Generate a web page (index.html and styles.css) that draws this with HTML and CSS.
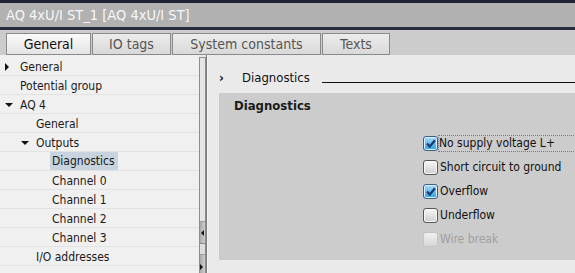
FILE: index.html
```html
<!DOCTYPE html>
<html lang="en">
<head>
    <meta charset="UTF-8">
    <title>AQ 4xU/I ST_1</title>
    <link rel="stylesheet" href="styles.css">
</head>
<body>
    <div class="window">
        <div class="topband"></div>
        <div class="titlebar">AQ 4xU/I ST_1 [AQ 4xU/I ST]</div>
        <div class="titleline"></div>

        <!-- Tabs -->
        <div class="tabbar">
            <div class="tab active tab-general">General</div>
            <div class="tab tab-io">IO tags</div>
            <div class="tab tab-sys">System constants</div>
            <div class="tab tab-texts">Texts</div>
        </div>

        <div class="main">
            <!-- Navigation tree -->
            <div class="tree">
                <div class="row lvl0"><span class="tog"><span class="arrow-right"></span></span>General</div>
                <div class="row lvl0"><span class="tog"></span>Potential group</div>
                <div class="row lvl0"><span class="tog"><span class="arrow-down"></span></span>AQ 4</div>
                <div class="row lvl1"><span class="tog"></span>General</div>
                <div class="row lvl1"><span class="tog"><span class="arrow-down"></span></span>Outputs</div>
                <div class="row lvl2"><span class="tog"></span><span class="selected">Diagnostics</span></div>
                <div class="row lvl2"><span class="tog"></span>Channel 0</div>
                <div class="row lvl2"><span class="tog"></span>Channel 1</div>
                <div class="row lvl2"><span class="tog"></span>Channel 2</div>
                <div class="row lvl2"><span class="tog"></span>Channel 3</div>
                <div class="row lvl1"><span class="tog"></span>I/O addresses</div>
            </div>

            <div class="vscroll">
                <div class="vscroll-fill"></div>
                <div class="split-btn"><span class="tri-left"></span></div>
                <div class="split-gap"></div>
                <div class="split-btn last"><span class="tri-right"></span></div>
            </div>
            <div class="splitter"></div>

            <!-- Properties area -->
            <div class="content">
                <div class="section-head">
                    <span class="chev">&rsaquo;</span>
                    <span class="section-title">Diagnostics</span>
                    <span class="section-line"></span>
                </div>

                <div class="group">
                    <div class="group-title">Diagnostics</div>
                    <div class="options">
                        <div class="option">
                            <span class="cb checked">
                                <svg width="10" height="9" viewBox="0 0 10 9"><path d="M1 4.5 L3.8 7.5 L9 1.2" fill="none" stroke="#183a72" stroke-width="2.2"/></svg>
                            </span>
                            <span class="opt-label focused">No supply voltage L+</span>
                        </div>
                        <div class="option">
                            <span class="cb"></span>
                            <span class="opt-label">Short circuit to ground</span>
                        </div>
                        <div class="option">
                            <span class="cb checked">
                                <svg width="10" height="9" viewBox="0 0 10 9"><path d="M1 4.5 L3.8 7.5 L9 1.2" fill="none" stroke="#183a72" stroke-width="2.2"/></svg>
                            </span>
                            <span class="opt-label">Overflow</span>
                        </div>
                        <div class="option">
                            <span class="cb"></span>
                            <span class="opt-label">Underflow</span>
                        </div>
                        <div class="option disabled">
                            <span class="cb"></span>
                            <span class="opt-label">Wire break</span>
                        </div>
                    </div>
                </div>
            </div>
        </div>
    </div>
</body>
</html>
```

FILE: styles.css
```css
* {
    box-sizing: border-box;
    margin: 0;
    padding: 0;
}

body {
    font-family: "DejaVu Sans Condensed", "DejaVu Sans", sans-serif;
    background-color: #ebebeb;
}

.window {
    width: 575px;
    height: 273px;
    overflow: hidden;
}

.topband {
    height: 3px;
    background: #1e2236;
}

.titlebar {
    height: 24px;
    line-height: 24px;
    padding-left: 6px;
    background: #b1b1b1;
    color: #f7f7f7;
    font-size: 14.5px;
    white-space: nowrap;
}

.titleline {
    height: 3px;
    background: #262b3e;
}

/* Tabs */
.tabbar {
    height: 25px;
    background: #cccccc;
    display: flex;
    align-items: flex-end;
    padding-left: 6px;
    gap: 1px;
}

.tab {
    height: 22px;
    line-height: 20px;
    border: 1px solid #8a8a8a;
    background: linear-gradient(#ececec, #d9d9d9);
    color: #555;
    font-size: 14px;
    text-align: center;
    white-space: nowrap;
}

.tab.active {
    background: linear-gradient(#fafafa, #e4e4e4);
    color: #111;
}

.tab-general { width: 85px; }
.tab-io { width: 79px; }
.tab-sys { width: 149px; }
.tab-texts { width: 68px; }

.main {
    display: flex;
    height: 218px;
}

/* Tree */
.tree {
    width: 199px;
    flex-shrink: 0;
    background: #f0f0f0;
    padding-top: 2px;
    font-size: 12px;
    color: #1a1a1a;
}

.row {
    height: 19px;
    line-height: 18px;
    padding-top: 1px;
    border-bottom: 1px solid #e2e2e2;
    display: flex;
    align-items: center;
    white-space: nowrap;
}

.lvl0 { padding-left: 4px; }
.lvl1 { padding-left: 20px; }
.lvl2 { padding-left: 36px; }

.tog {
    width: 16px;
    height: 17px;
    display: flex;
    align-items: center;
    flex-shrink: 0;
}

.arrow-right {
    margin-left: 1px;
    border-left: 4px solid #111;
    border-top: 4px solid transparent;
    border-bottom: 4px solid transparent;
}

.arrow-down {
    margin-left: 1px;
    border-top: 4px solid #111;
    border-left: 4px solid transparent;
    border-right: 4px solid transparent;
}

.selected {
    background: #c7d3de;
    margin-left: -2px;
    margin-top: -1px;
    padding: 1px 3px 0 2px;
    height: 18px;
    line-height: 17px;
}

/* Scrollbar / splitter */
.vscroll {
    width: 7px;
    flex-shrink: 0;
    margin-top: 2px;
    border: 1px solid #8c8c8c;
    border-bottom: none;
    background: #e6e6e6;
    display: flex;
    flex-direction: column;
}

.vscroll-fill {
    flex: 1;
}

.split-btn {
    height: 22px;
    background: linear-gradient(90deg, #a9a9a9, #cfcfcf);
    border-top: 1px solid #9a9a9a;
    display: flex;
    align-items: center;
}

.split-btn.last {
    height: 19px;
    align-items: flex-end;
    padding-bottom: 3px;
}

.split-gap {
    height: 11px;
    border-top: 1px solid #8c8c8c;
    background: #dedede;
}

.tri-left {
    margin-left: 1px;
    border-right: 3px solid #111;
    border-top: 3px solid transparent;
    border-bottom: 3px solid transparent;
}

.tri-right {
    margin-left: 0;
    border-left: 3px solid #111;
    border-top: 3px solid transparent;
    border-bottom: 3px solid transparent;
}

.splitter {
    width: 2px;
    flex-shrink: 0;
    background: #7c7c7c;
    border-right: 1px solid #f4f4f4;
}

/* Properties */
.content {
    flex: 1;
    min-width: 0;
    overflow: hidden;
    background: #eaeaea;
    padding-top: 13px;
}

.section-head {
    display: flex;
    align-items: center;
    height: 18px;
    padding-left: 11px;
    font-size: 13px;
    color: #111;
}

.chev {
    width: 23px;
    font-weight: bold;
    font-size: 13px;
}

.section-title {
    white-space: nowrap;
}

.section-line {
    flex: 1;
    height: 1px;
    background: #111;
    margin-left: 12px;
    margin-top: 10px;
}

.group {
    margin-left: 11px;
    margin-top: 7px;
    height: 167px;
    background: #cccccc;
    padding: 5px 0 0 15px;
}

.group-title {
    font-size: 13px;
    font-weight: bold;
    color: #1a1a1a;
    height: 16px;
}

.options {
    margin-top: 22px;
    margin-left: 190px;
    display: flex;
    flex-direction: column;
    gap: 10px;
}

.option {
    display: flex;
    align-items: center;
    height: 14px;
    font-size: 12px;
    color: #111;
    white-space: nowrap;
}

.cb {
    width: 15px;
    height: 15px;
    margin-left: -1px;
    border: 1px solid #555;
    border-radius: 3px;
    background: linear-gradient(#f6f6f6, #cfcfcf);
    box-shadow: inset 0 0 0 1px #fafafa;
    display: flex;
    align-items: center;
    justify-content: center;
    flex-shrink: 0;
}

.cb.checked {
    border-color: #3d5c86;
    background: linear-gradient(#a6e0fa, #2e9fde);
    box-shadow: inset 0 0 0 1px #dff4ff;
}

.opt-label {
    margin-left: 1px;
    padding: 0 1px;
    line-height: 14px;
}

.opt-label.focused {
    border: 1px dotted #6b7a99;
    padding: 0 200px 1px 0;
    margin-left: 0;
}

.option.disabled {
    color: #a0a0a0;
}

.option.disabled .cb {
    border-color: #c4c4c4;
    background: linear-gradient(#f0f0f0, #d8d8d8);
    box-shadow: none;
}
```
